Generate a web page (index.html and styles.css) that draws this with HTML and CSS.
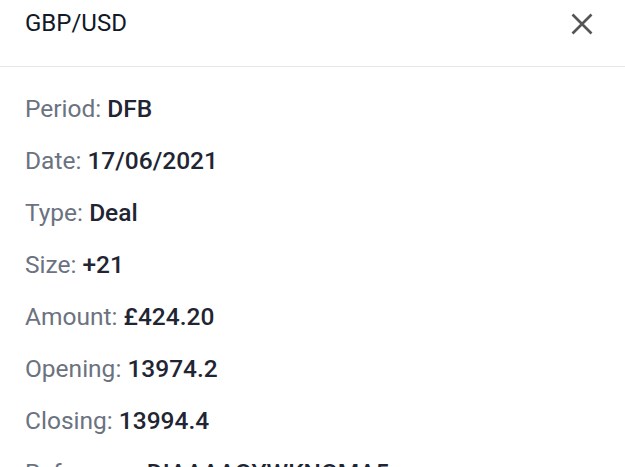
FILE: index.html
```html
<!DOCTYPE html>
<html>
<head>
<meta charset="utf-8">
<link rel="stylesheet" href="styles.css">
</head>
<body>
<div class="modal">
  <header class="head">
    <h1 class="title">GBP/USD</h1>
    <button class="close" aria-label="Close">
      <svg width="22" height="22" viewBox="0 0 22 22"><path d="M1.5 1.5 L20.5 20.5 M20.5 1.5 L1.5 20.5" stroke="#555" stroke-width="2.6" fill="none"/></svg>
    </button>
  </header>
  <div class="body">
    <p class="row"><span class="label">Period:</span> <span class="val">DFB</span></p>
    <p class="row"><span class="label">Date:</span> <span class="val">17/06/2021</span></p>
    <p class="row"><span class="label">Type:</span> <span class="val">Deal</span></p>
    <p class="row"><span class="label">Size:</span> <span class="val">+21</span></p>
    <p class="row"><span class="label">Amount:</span> <span class="val">£424.20</span></p>
    <p class="row"><span class="label">Opening:</span> <span class="val">13974.2</span></p>
    <p class="row"><span class="label">Closing:</span> <span class="val">13994.4</span></p>
    <p class="row"><span class="label">Reference:</span> <span class="val">DIAAAAGYWKNGMA5</span></p>
  </div>
</div>
</body>
</html>
```
FILE: styles.css
```css
html, body { margin: 0; padding: 0; background: #fff; overflow: hidden; }
.modal { font-family: Roboto, sans-serif; width: 625px; }
.head {
  height: 67px;
  box-sizing: border-box;
  border-bottom: 1px solid #e8e8ea;
  display: flex;
  align-items: flex-start;
  justify-content: space-between;
  padding: 7px 32px 0 25px;
}
.title {
  margin: 0;
  font-weight: 400;
  font-size: 24px;
  line-height: 32px;
  color: #111827;
}
.close {
  border: 0; background: none; padding: 0; margin-top: 6px;
  display: flex; width: 22px; height: 22px;
}
.body { padding: 16px 25px 0 25px; }
.row {
  margin: 0;
  font-size: 24.5px;
  line-height: 52px;
  height: 52px;
  white-space: nowrap;
}
.label { color: #6b7280; }
.val { color: #1f2533; font-weight: 500; }
```
